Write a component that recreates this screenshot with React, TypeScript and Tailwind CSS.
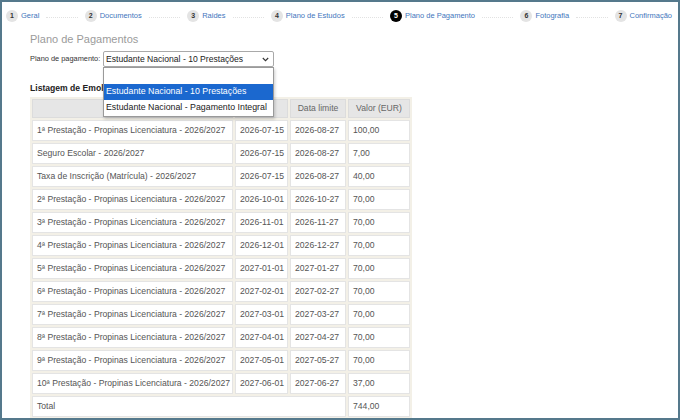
import React from 'react';

const steps = [
  'Geral',
  'Documentos',
  'Raides',
  'Plano de Estudos',
  'Plano de Pagamento',
  'Fotografia',
  'Confirmação',
];

const ACTIVE = 5;

const rows: [string, string, string, string][] = [
  ['1ª Prestação - Propinas Licenciatura - 2026/2027', '2026-07-15', '2026-08-27', '100,00'],
  ['Seguro Escolar - 2026/2027', '2026-07-15', '2026-08-27', '7,00'],
  ['Taxa de Inscrição (Matrícula) - 2026/2027', '2026-07-15', '2026-08-27', '40,00'],
  ['2ª Prestação - Propinas Licenciatura - 2026/2027', '2026-10-01', '2026-10-27', '70,00'],
  ['3ª Prestação - Propinas Licenciatura - 2026/2027', '2026-11-01', '2026-11-27', '70,00'],
  ['4ª Prestação - Propinas Licenciatura - 2026/2027', '2026-12-01', '2026-12-27', '70,00'],
  ['5ª Prestação - Propinas Licenciatura - 2026/2027', '2027-01-01', '2027-01-27', '70,00'],
  ['6ª Prestação - Propinas Licenciatura - 2026/2027', '2027-02-01', '2027-02-27', '70,00'],
  ['7ª Prestação - Propinas Licenciatura - 2026/2027', '2027-03-01', '2027-03-27', '70,00'],
  ['8ª Prestação - Propinas Licenciatura - 2026/2027', '2027-04-01', '2027-04-27', '70,00'],
  ['9ª Prestação - Propinas Licenciatura - 2026/2027', '2027-05-01', '2027-05-27', '70,00'],
  ['10ª Prestação - Propinas Licenciatura - 2026/2027', '2027-06-01', '2027-06-27', '37,00'],
];

const Stepper: React.FC = () => (
  <div className="flex items-center h-[14px] pl-[4px] pr-[6px]">
    {steps.map((label, i) => {
      const n = i + 1;
      const active = n === ACTIVE;
      return (
        <React.Fragment key={label}>
          <div className="flex items-center shrink-0">
            <span
              className={
                active
                  ? 'w-[12px] h-[12px] rounded-full bg-black text-white text-[7px] font-bold flex items-center justify-center'
                  : 'w-[12px] h-[12px] rounded-full bg-[#e4e4e4] text-[#333] text-[7px] font-bold flex items-center justify-center'
              }
            >
              {n}
            </span>
            <span className="ml-[3px] text-[7.5px] text-[#3f76bd] whitespace-nowrap">{label}</span>
          </div>
          {n < steps.length && <div className="flex-1 mx-[7px] mt-[3px] border-t border-dotted border-[#e2e2e2]" />}
        </React.Fragment>
      );
    })}
  </div>
);

const cell = 'bg-white border border-[#e4e4e4] px-[4px] h-[21px] text-[8.65px] text-[#555] whitespace-nowrap overflow-hidden';
const head = 'h-[19px] bg-[#e6e6e6] border border-[#dcdcdc] text-[8.65px] font-normal text-[#666] whitespace-nowrap';

export default function App() {
  return (
    <div
      className="w-[680px] h-[420px] overflow-hidden bg-white border-2 border-[#55798c]"
      style={{ fontFamily: '"Liberation Sans", Arial, sans-serif' }}
    >
      <div className="pt-[7px]">
        <Stepper />
      </div>
      <div className="pl-[28px]">
        <h2 className="mt-[10px] text-[11px] leading-[13px] text-[#9b9b9b]">Plano de Pagamentos</h2>

        <div className="relative mt-[5px] flex items-center">
          <span className="w-[73px] text-[7.4px] text-[#333] whitespace-nowrap">Plano de pagamento:</span>
          <div className="w-[171px] h-[16px] border border-[#a9a9a9] rounded-[2px] flex items-center justify-between pl-[2px] pr-[4px]">
            <span className="text-[8.6px] text-[#222] whitespace-nowrap">Estudante Nacional - 10 Prestações</span>
            <svg width="7" height="5" viewBox="0 0 7 5" className="text-[#333]">
              <path d="M0.8 1 L3.5 3.7 L6.2 1" fill="none" stroke="currentColor" strokeWidth="1.1" />
            </svg>
          </div>

          <div className="absolute left-[73px] top-[16px] w-[171px] z-10 bg-white border border-[#9a9a9a] shadow-[1px_2px_3px_rgba(0,0,0,0.2)]">
            <div className="h-[16px]" />
            <div className="h-[16px] bg-[#1b68cf] text-white text-[8.8px] flex items-center pl-[2px] whitespace-nowrap">
              Estudante Nacional - 10 Prestações
            </div>
            <div className="h-[16px] text-[#222] text-[8.8px] flex items-center pl-[2px] whitespace-nowrap">
              Estudante Nacional - Pagamento Integral
            </div>
          </div>
        </div>

        <h3 className="mt-[16px] text-[8.6px] leading-[11px] font-bold text-[#222]">Listagem de Emolumentos</h3>

        <table className="mt-[3px] table-fixed w-[382px] border-separate border-spacing-[2px] bg-[#f3f0e7]">
          <thead>
            <tr>
              <th className={`w-[201px] ${head}`} />
              <th className={`w-[53px] ${head}`}>Data</th>
              <th className={`w-[56px] ${head}`}>Data limite</th>
              <th className={`w-[62px] ${head}`}>Valor (EUR)</th>
            </tr>
          </thead>
          <tbody>
            {rows.map((r) => (
              <tr key={r[0]}>
                <td className={cell}>{r[0]}</td>
                <td className={cell}>{r[1]}</td>
                <td className={cell}>{r[2]}</td>
                <td className={cell}>{r[3]}</td>
              </tr>
            ))}
            <tr>
              <td className={cell} colSpan={3}>Total</td>
              <td className={cell}>744,00</td>
            </tr>
          </tbody>
        </table>
      </div>
    </div>
  );
}
